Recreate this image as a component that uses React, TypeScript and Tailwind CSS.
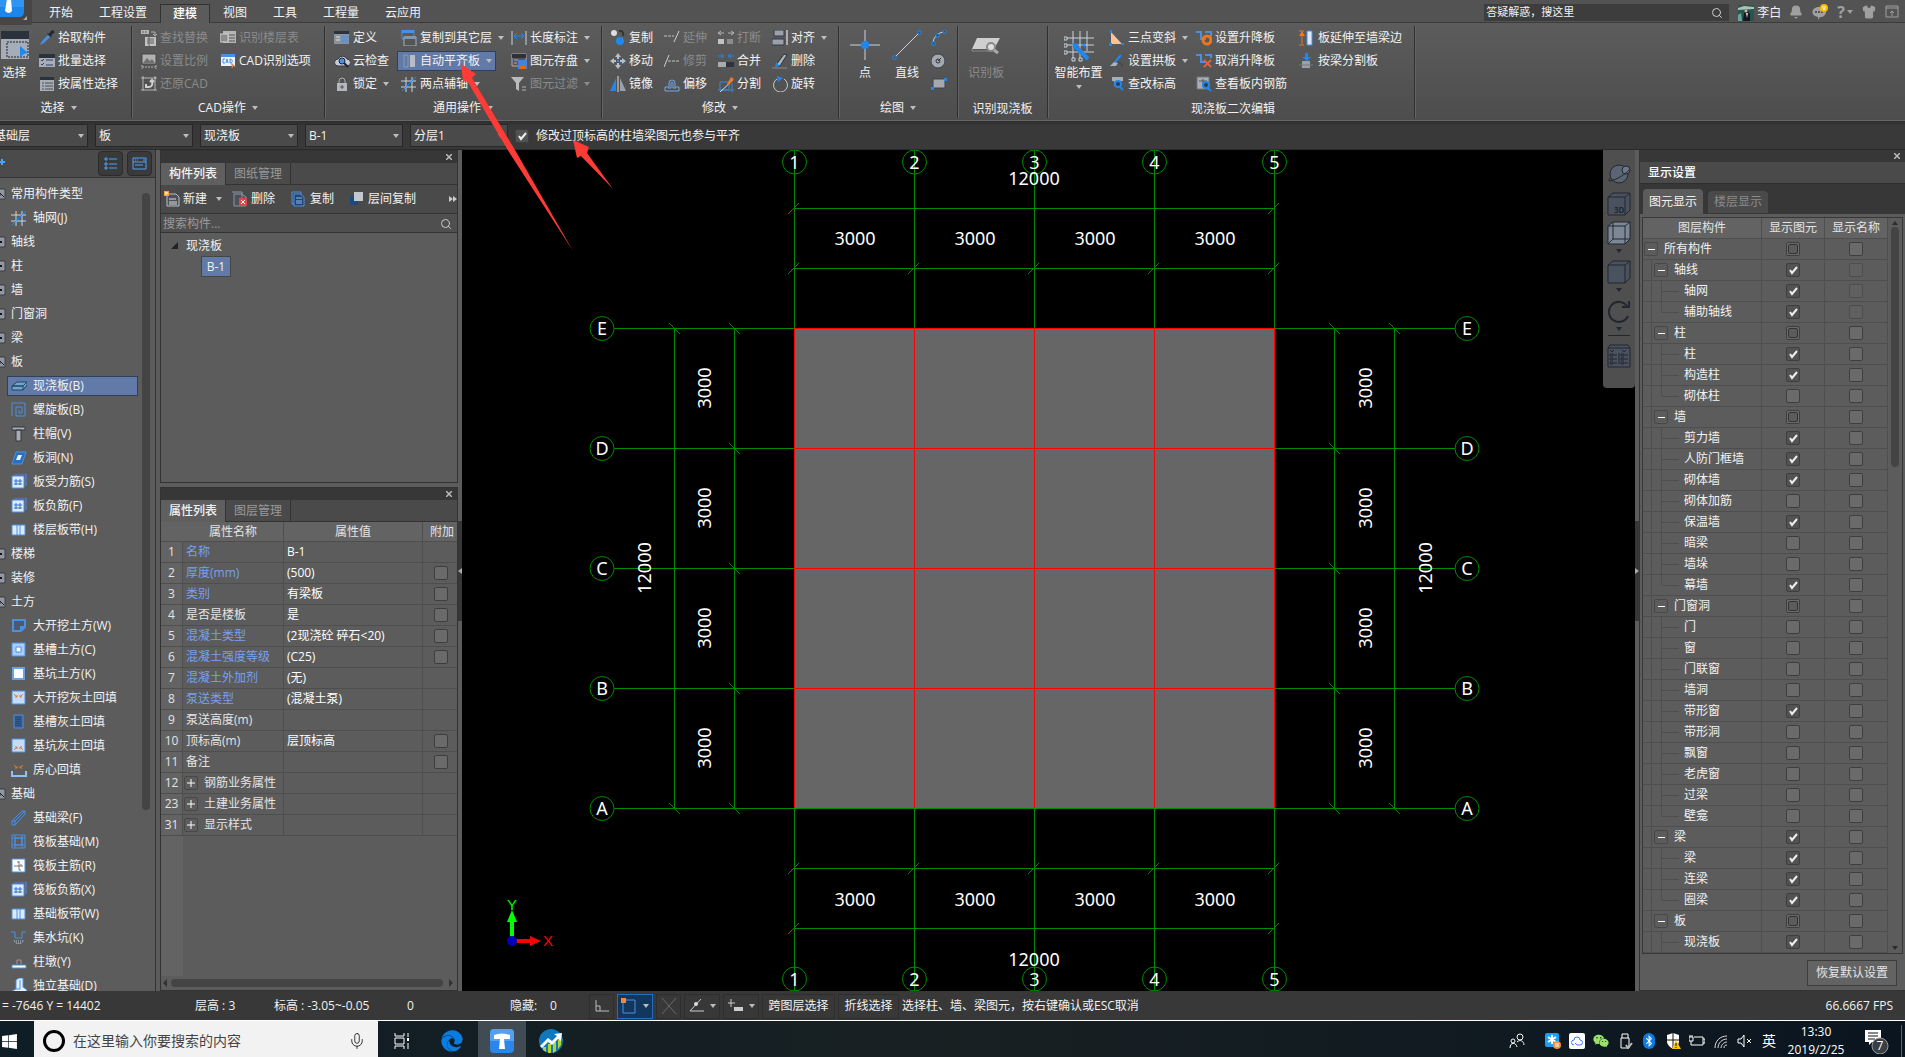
import { Fragment, ReactNode } from 'react';
import { Mic, Search, Shirt, Bell } from 'lucide-react';
import { FaWindows, FaEdge, FaBluetoothB, FaWeixin } from 'react-icons/fa';

const B = '#4a90e2';
const L = '#c9d3de';
const G = '#a9adb5';

// 16x16 drawings, keyed by tool
const icons: Record<string, ReactNode> = {
    pick: <><path d="M1 15l2-4 6-6 2 2-6 6z" fill={B} /><path d="M8 4l1-1 1 1 2-3c2-2 4 0 3 2l-3 2 1 1-1 1z" fill="#222831" /></>,
    batch: <><path d="M0 1h16v4H0z" fill="#2c323c" /><path d="M0 5h16v9H0z" fill={G} /><path d="M2 7l1 1 2-2M2 11l1 1 2-2M7 7h7M7 12h7" stroke="#27456e" fill="none" /></>,
    attr: <><path d="M1 1h14v3H1z" fill="#2c323c" /><path d="M1 4h14v11H1z" fill={G} /><path d="M3 7h2M3 10h2M3 13h2M6 7h8M6 10h8M6 13h8" stroke="#4a4f58" /></>,
    findrep: <><path d="M0 0h8v4H0z" fill="#ccc" /><path d="M2 1v2M5 1v2" stroke="#666" /><path d="M10 2h4v4M12 4l2 2 2-2" stroke="#ccc" fill="none" /><path d="M4 7h11v9H4z" fill="#ddd" /><path d="M6 9h7M6 11h7M6 13h7M8 7v9" stroke="#666" /></>,
    scale: <><path d="M1 1h14v10H1z" fill="#c8c8c8" stroke="#444" /><path d="M2 10l4-5 3 3 2-2 3 4z" fill="#777" /><path d="M1 14h14M1 12v4M15 12v4" stroke="#ccc" strokeDasharray="2 1" /></>,
    restore: <><path d="M2 2h12v12H2zM0 2h3M13 2h3M0 14h3M13 14h3M2 0v3M14 0v3" stroke="#ccc" fill="none" /><path d="M5 11h3c3 0 4-3 3-6M5 8v3h3M13 6l-2-2-2 2" stroke="#eee" strokeWidth="2" fill="none" /></>,
    floors: <><path d="M3 1h13v12H3z" fill="#ccc" /><path d="M0 4h8v8H0z" fill="#999" stroke="#eee" /><path d="M9 5h6M9 8h6M9 11h6" stroke="#555" /></>,
    cad: <><path d="M1 1h14v12H1z" fill="#e8f1ff" /><path d="M1 1h14v3H1z" fill={B} /><path d="M5 6H3v4h2M6 10l1-4 1 4M10 6v4c3 0 3-4 0-4" stroke={B} fill="none" /><path d="M11 9l5 5-3-1-1 3z" fill="#f08a60" /></>,
    define: <><path d="M0 1h15v13H0z" fill="#8d939c" /><path d="M0 1h15v3H0z" fill="#2c323c" /><path d="M2 7h4M2 10h4" stroke="#ddd" /><path d="M8 6h6v2H8zM8 10h6v2H8z" stroke={B} fill="none" /></>,
    cloud: <><path d="M4 13a3 3 0 010-7 5 5 0 019 0 3 3 0 010 7z" fill="#c6ccd6" stroke="#333b47" /><circle cx="8" cy="8" r="3" fill={B} stroke="#223" /><path d="M10 10l4 4" stroke="#223" strokeWidth="2" /></>,
    lock: <><path d="M5 7V5a3 3 0 016 0v2" stroke={G} fill="none" /><path d="M3 7h10v8H3z" fill="#b4b7bd" /><path d="M8 9v4M6 11h4" stroke="#555" /></>,
    copyfloor: <><path d="M1 0h12v3H1z" fill={B} /><path d="M1 0h12v9H1z" fill="none" stroke={B} /><path d="M3 7h12v9H3z" fill="#555" stroke="#9fb0c4" /><path d="M3 6h12v3H3z" fill="#8496a8" /></>,
    level: <><path d="M3 2h4v12H3z" fill="none" stroke="#8b99b0" /><path d="M9 2h5v12H9z" fill="#b6bdc9" /></>,
    axis: <><path d="M5 1v15M11 1v15M0 5h15M0 11h15" stroke={L} /><path d="M1 15L15 1" stroke="#1e88f0" /></>,
    length: <><path d="M1 1v14M15 1v14" stroke={L} /><path d="M3 6h10" stroke="#1e88f0" /><path d="M6 3L3 6l3 3M10 3l3 3-3 3" stroke="#1e88f0" fill="none" /></>,
    save: <><path d="M1 1h14v12H1z" fill="none" stroke={G} /><path d="M1 1h14v4H1z" fill="#2c323c" /><path d="M3 7h4M3 10h3" stroke={G} /><path d="M7 7h9v9H7z" fill="#3d86da" /><path d="M9 13h5v3H9z" fill="#e06a1c" /></>,
    filter: <><path d="M0 1h13L8 7v8l-3-2V7z" fill="#d5d5d5" /><path d="M11 11h4M11 14h4" stroke="#ccc" /></>,
    copy: <><circle cx="4" cy="3" r="3" fill="#ddd" /><circle cx="10" cy="11" r="4" fill="#1e88f0" /><path d="M9 1c3-1 5 2 4 5" stroke="#333" fill="none" strokeWidth="2" /></>,
    move: <><path d="M8 0l3 4H9v2H7V4H5zM8 16l-3-4h2v-2h2v2h2zM0 8l4-3v2h2v2H4v2zM16 8l-4 3V9h-2V7h2V5z" fill="#b8bfca" /><path d="M7 7h2v2H7z" fill="#1e88f0" /></>,
    mirror: <><path d="M6 2v13H0z" fill="#1e88f0" /><path d="M10 2v13h6z" fill="#9aa0aa" /><path d="M8 0v16" stroke="#ddd" /></>,
    extend: <><path d="M0 6h10" stroke="#ddd" strokeDasharray="3 1" /><path d="M10 12l5-11" stroke="#eee" /></>,
    trim: <><path d="M0 14L5 2" stroke="#eee" /><path d="M4 8h12" stroke="#ddd" strokeDasharray="3 1" /></>,
    offset: <path d="M1 15v-4h4V7a3 3 0 116 0v4h4v4zM4 12h3V7c0-1 2-1 2 0v5h3" fill="none" stroke="#6fa8e8" />,
    breaks: <><path d="M0 9h6v5H0z" fill="#ddd" /><path d="M9 9h6v5H9z" fill="#999" /><path d="M0 3h6M3 1L0 3l3 2M10 3h6M13 1l3 2-3 2" stroke="#ccc" fill="none" /></>,
    merge: <><path d="M0 9h8v5H0z" fill="#aaa" /><path d="M8 9h8v5H8z" fill="#2d3440" /><path d="M0 3h6M3 1l3 2-3 2M16 3h-6M13 1l-3 2 3 2" stroke="#1e88f0" fill="none" /></>,
    split: <><path d="M2 6h9v8H2zM0 14h16M14 7v9" fill="none" stroke="#3d86da" /><path d="M2 16L15 4" stroke="#ddd" /><path d="M9 8l4-7 3 2-5 6z" fill="#ef7a23" /></>,
    align: <><path d="M2 0h10v6H2zM0 9h12v6H0z" fill="#9ba1ab" stroke="#333b47" /><path d="M15 0v15" stroke="#fff" /></>,
    erase: <><path d="M4 12L12 1l3 1-7 11z" fill={G} stroke="#2c323c" /><path d="M4 9l4 4-5 1z" fill="#1e88f0" /><path d="M0 15h15" stroke="#888" /></>,
    rotate: <><path d="M5 3a7 7 0 107 0" fill="none" stroke="#c5cad2" /><path d="M5 0l6 2-5 4z" fill="#1e88f0" /></>,
    arc: <><path d="M2 14C2 7 7 2 14 2" stroke={L} fill="none" /><path d="M1 12h3v3H1zM5 4h3v3H5zM12 0h3v3h-3z" fill="#444" stroke="#1e88f0" /></>,
    circle: <><circle cx="7" cy="8" r="7" fill="#a4a8b0" stroke="#3c424c" /><path d="M7 8l3-3" stroke="#333" /><circle cx="7" cy="8" r="2" fill="none" stroke="#333" /></>,
    rect: <><path d="M2 3h12v9H2z" fill="#a4a8b0" stroke="#3c424c" /><path d="M0 11h3v3H0zM13 2h3v3h-3z" fill="#1e88f0" /></>,
    slope: <><path d="M2 2v12h11z" fill="#fbc39a" /><path d="M1 0h2v3H1zM0 13h3v3H0zM12 13h3v2h-3z" fill="#1e88f0" /></>,
    arch: <><path d="M6 9l6-7" stroke="#1e88f0" strokeWidth="2" /><path d="M1 13l4-4 4 1-2 3z" fill="#a9b3bd" /><path d="M9 10c3-1 4 1 4 4" stroke="#3c424c" fill="none" /></>,
    elev: <><path d="M3 1h11v4h-3v5H5V5H3z" fill={G} /><circle cx="9" cy="8" r="3" fill="#333b47" stroke="#1e88f0" strokeWidth="2" /><path d="M11 11l3 3" stroke="#1e88f0" strokeWidth="2" /></>,
    lift: <><path d="M0 2h5v7h5M9 2h6v4" stroke={B} strokeWidth="2" fill="none" /><circle cx="11" cy="10" r="4" fill="none" stroke="#f0761d" strokeWidth="3" /></>,
    unlift: <><path d="M0 2h5v7h4M9 2h6v3" stroke={B} strokeWidth="2" fill="none" /><path d="M8 7l7 7M15 7l-7 7" stroke="#d9663f" strokeWidth="2" /></>,
    rebar: <><path d="M1 1h12v12H1z" fill={G} stroke="#777" /><path d="M3 5h8M7 3v8" stroke="#555" /><circle cx="10" cy="9" r="3" fill="#333b47" stroke="#1e88f0" strokeWidth="2" /><path d="M12 12l3 3" stroke="#1e88f0" strokeWidth="2" /></>,
    towall: <><path d="M3 3v11M0 1h5M0 15h5" stroke="#f0761d" /><path d="M3 1l3 5H0z" fill="#f0761d" /><path d="M8 1h5v14H8z" fill="#dbe9ff" stroke={B} /></>,
    bybeam: <><path d="M3 8h8v7H3z" fill="#9aa0aa" /><path d="M0 12h14" stroke="#777" /><path d="M6 0h3v4h3l-4 4-5-4h3z" fill="#1e88f0" /></>,
    slab: <><path d="M1 8l5-4h10l-4 4zM1 8h11v4H1zM12 8l4-4v3l-4 5" fill="#6fa6c9" stroke="#1f4569" /></>,
    spiral: <path d="M1 14V1h13v13H5V5h6v6H8V8" fill="none" stroke={B} />,
    cap: <><path d="M1 1h13v3H1zM5 4h5v11H5z" fill={G} stroke="#33383f" /></>,
    hole: <><path d="M1 14L5 2h10l-4 12z" fill="#2a6fbf" stroke={B} /><path d="M5 10l2-5h4l-2 5z" fill="#e8f4ff" /></>,
    bars: <><path d="M3 0h12v12" fill="none" stroke={B} /><path d="M1 2h12v12H1z" fill="#dcebff" stroke={B} /><path d="M3 7h8M5 5v6M9 5v6M3 10h8" stroke="#3473c0" /></>,
    strip: <><path d="M1 3h13v10H1z" fill="#dcebff" stroke={B} /><path d="M6 3v10M9 3v10" stroke={B} /></>,
    dig: <path d="M2 2h12v7l-4 4H2zM14 9h-4v4" fill="#4c5a70" stroke={B} strokeWidth="2" />,
    trench: <><path d="M1 1h13v13H1z" fill="#a9cdf6" stroke={B} /><path d="M5 5h5v5H5z" fill="#fff" stroke={B} /></>,
    pit: <path d="M2 2h11v11H2z" fill="#fff" stroke="#66a3ea" strokeWidth="2" />,
    fill: <><path d="M1 1h13v13H1z" fill="#c5ddf9" stroke={B} /><path d="M3 4l3 3M12 4L9 7M6 5v2H4M9 5v2h2" stroke="#e07b32" fill="none" /></>,
    trenchfill: <><path d="M3 1h9v13H3z" fill="#365a8c" stroke={B} /><path d="M5 3v10M7 3v10M9 3v10" stroke="#22395c" strokeDasharray="1 1" /></>,
    pitfill: <><path d="M1 1h13v13H1z" fill="#c5ddf9" stroke={B} /><path d="M3 12l3-3M12 12L9 9M4 9h2v2M11 9H9v2" stroke="#e07b32" fill="none" /></>,
    room: <><path d="M1 9v5h14V9" fill="none" stroke="#8fc0f7" strokeWidth="2" /><path d="M3 3l3 3M12 3L9 6M6 4v2H4M9 4v2h2" stroke="#e07b32" fill="none" /></>,
    fbeam: <path d="M1 15v-4L11 1h3v3L4 15zM1 11h3v4M4 11L14 1" fill="#4c5f78" stroke={B} />,
    raft: <path d="M1 1h13v13H1zM4 4h7v7H4zM4 1v13M11 1v13M1 4h13M1 11h13" fill="none" stroke={B} />,
    raftmain: <><path d="M1 1h13v13H1z" fill="#fff" stroke={B} /><path d="M3 8h9M8 3v9M6 4h2M10 6v2M8 12h2" stroke="#777" fill="none" /></>,
    sump: <><path d="M0 2h4v6h7V2h4M3 10c2 5 8 5 10 0" fill="none" stroke={B} /><path d="M3 11h10M5 13h6" stroke="#bbb" strokeDasharray="1 1" /></>,
    pier: <><path d="M1 11h14v3H1z" fill="#fff" stroke={B} /><path d="M6 10V6h4v4" fill="none" stroke="#999" /></>,
    footing: <><path d="M5 11V2l3-2h4v9l4 3v4H1v-3z" fill="#e6f1ff" stroke={B} /><path d="M9 2v9H5" fill="none" stroke={B} /></>,
    create: <><path d="M3 3h9l3 3v9H3z" fill="#4c5158" stroke="#b8bfc8" /><path d="M5 8h7M5 11h8M5 13h8" stroke="#ddd" /><path d="M0 0h5v5H0z" fill="#f5a623" /><path d="M2 1v3M1 2h3" stroke="#fff" /></>,
    del: <><path d="M0 1h10v12M2 3h8l4 3v9H2z" fill="#4c5158" stroke="#8c96a3" /><path d="M7 7h8v8H7z" fill="#d84a4a" /><path d="M9 9l4 4M13 9l-4 4" stroke="#fff" /></>,
    dup: <><path d="M1 1h9v12H1z" fill="none" stroke={B} /><path d="M3 3h6l4 3v9H3z" fill="#24446e" stroke={B} /><path d="M5 7h6M5 10h6M5 12h6" stroke="#8bbcf5" /></>,
    dupfloor: <><path d="M1 5h8v9H1z" fill="#1d4a7c" /><path d="M5 1h9v9H5z" fill="#c3c8d0" /></>,
};

function Icon({ name, dim }: { name: string; dim?: boolean }) {
    return <svg viewBox="0 0 16 16" className={dim ? 'size-4 shrink-0 opacity-80' : 'size-4 shrink-0'} aria-hidden="true">{icons[name]}</svg>;
}

function Caret({ className = 'text-[#bdbdbd]' }: { className?: string }) {
    return <svg viewBox="0 0 6 4" className={`h-1 w-1.5 shrink-0 ${className}`} aria-hidden="true"><path d="M0 0h6L3 4z" fill="currentColor" /></svg>;
}

function Tool({ icon, label, caret, off, on }: { icon: string; label: string; caret?: boolean; off?: boolean; on?: boolean }) {
    return (
        <div className="flex h-[23px] items-center">
            <button
                disabled={off}
                className={`-ml-1 flex h-5 items-center gap-[3px] border px-[3px] ${on ? 'border-[#30405c] bg-[#617aa8]' : 'border-transparent'} ${off ? 'text-[#8b8b8b]' : ''}`}
            >
                <Icon name={icon} dim={off} />
                <span>{label}</span>
                {caret && <span className="pl-[3px]"><Caret className={off ? 'text-[#8b8b8b]' : 'text-[#bdbdbd]'} /></span>}
            </button>
        </div>
    );
}

function Group({ label, caret, width, children, shift = 'pt-px' }: { label: string; caret?: boolean; width: string; children: ReactNode; shift?: string }) {
    return (
        <section className={`flex shrink-0 flex-col border-r border-[#2f2f2f] shadow-[1px_0_0_#646464] ${width}`}>
            <div className="flex h-[71px]">{children}</div>
            <div className={`flex h-[22px] items-center justify-center gap-1.5 ${shift}`}>
                {label}{caret && <Caret />}
            </div>
        </section>
    );
}

const tabs = ['开始', '工程设置', '建模', '视图', '工具', '工程量', '云应用'];

function TitleBar() {
    return (
        <header className="flex h-[23px] items-end border-b border-[#3c3c3c] bg-[#535353]">
            <div className="relative z-10 -mb-[3px] h-[26px] w-8 shrink-0 bg-[#464646]">
                <svg viewBox="0 0 32 26" className="h-full w-full" aria-hidden="true">
                    <path d="M0 0h24v13q0 5-5 5H0z" fill="#1c86ea" />
                    <path d="M0 0h24v8H0z" fill="#3ba0f6" opacity=".6" />
                    <path d="M7 0h4l1 12q-3 4-7 0z" fill="#fff" />
                    <path d="M27 17v4h-4z" fill="#aaa" />
                </svg>
            </div>
            <nav className="flex pl-1">
                {tabs.map(t => (
                    <button key={t} className={`h-[18px] px-3 leading-4 ${t === '建模' ? '-mb-px h-[19px] border border-b-0 border-[#333] bg-[#5b5b5b] font-medium text-white' : 'border-x border-transparent'}`}>
                        {t}
                    </button>
                ))}
            </nav>
            <label className="mb-px ml-auto flex h-[17px] w-[245px] items-center bg-[#3d3d3d] px-0.5 text-[11px]">
                <input aria-label="搜索" defaultValue="答疑解惑，搜这里" className="min-w-0 flex-1 outline-none" />
                <Search className="mr-1 size-3 text-[#ccc]" />
            </label>
            <div className="flex h-full items-center gap-[3px] pt-[3px] pl-[9px]">
                <svg viewBox="0 0 16 16" className="size-4" aria-hidden="true">
                    <path d="M0 0h16v16H0z" fill="#28564f" />
                    <path d="M0 3l6-2 10 1v2L0 5z" fill="#a9c4b4" />
                    <path d="M5 16l1-8 3-3 3 4v7z" fill="#15191d" />
                    <path d="M8 8l1 5 1-5z" fill="#ddd" />
                    <circle cx="8" cy="6" r="1.5" fill="#d8b49a" />
                    <path d="M0 10l3-2 1 8H0z" fill="#6aa39c" />
                </svg>
                <span>李白</span>
            </div>
            <div className="flex h-full items-center gap-[9px] pt-0.5 pr-1.5 pl-2 text-[#a0a0a0]">
                <Bell className="size-3.5 fill-current" />
                <svg viewBox="0 0 16 16" className="size-4" aria-label="消息">
                    <path d="M7 3c9 0 9 10 1 10l-2 3v-3C-2 12-1 3 7 3z" fill="#a0a0a0" />
                    <path d="M3 8h2M6 8h2M9 8h2" stroke="#555" strokeWidth="2" />
                    <circle cx="12" cy="4" r="4" fill="#ffb800" /><path d="M11 2v2l1 2 1-2V2" fill="none" stroke="#fff" />
                </svg>
                <span className="flex items-center gap-0.5 text-base leading-4 font-bold">?<Caret className="text-[#a0a0a0]" /></span>
                <Shirt className="size-3.5 fill-current" />
                <svg viewBox="0 0 14 14" className="size-3.5" aria-label="收起"><path d="M1 1h12v11H1zM1 3h12M7 11V6M5 8l2-2 2 2" fill="none" stroke="currentColor" /></svg>
            </div>
        </header>
    );
}

function Ribbon() {
    return (
        <div className="flex h-[98px] overflow-hidden border-b border-[#666] bg-linear-to-b from-[#5c5c5c] to-[#4d4d4d] pt-[3px] pb-0.5">
            <Group label="选择" caret width="w-[132px]" shift="pt-px pr-3.5">
                <button className="flex w-[29px] flex-col items-center gap-1.5 pt-[5px]">
                    <svg viewBox="0 0 28 28" className="size-7" aria-hidden="true">
                        <path d="M0 0h28v8H0z" fill="#2c323c" /><path d="M0 8h28v20H0z" fill="#a6adb9" />
                        <path d="M6 11h21v15H6z" fill="none" stroke="#222" strokeDasharray="2 1" /><path d="M19 15l8 7-4 1-4 3z" fill="#1e88f0" />
                    </svg>
                    <span className="w-6 whitespace-nowrap leading-4">选择</span>
                </button>
                <div className="pl-2.5">
                    <Tool icon="pick" label="拾取构件" />
                    <Tool icon="batch" label="批量选择" />
                    <Tool icon="attr" label="按属性选择" />
                </div>
            </Group>
            <Group label="CAD操作" caret width="w-[193px]">
                <div className="w-[88px] pl-[9px]">
                    <Tool icon="findrep" label="查找替换" off />
                    <Tool icon="scale" label="设置比例" off />
                    <Tool icon="restore" label="还原CAD" off />
                </div>
                <div>
                    <Tool icon="floors" label="识别楼层表" off />
                    <Tool icon="cad" label="CAD识别选项" />
                </div>
            </Group>
            <Group label="通用操作" caret width="w-[277px]">
                <div className="w-[76px] pl-[9px]">
                    <Tool icon="define" label="定义" />
                    <Tool icon="cloud" label="云检查" />
                    <Tool icon="lock" label="锁定" caret />
                </div>
                <div className="w-[110px]">
                    <Tool icon="copyfloor" label="复制到其它层" caret />
                    <Tool icon="level" label="自动平齐板" caret on />
                    <Tool icon="axis" label="两点辅轴" caret />
                </div>
                <div>
                    <Tool icon="length" label="长度标注" caret />
                    <Tool icon="save" label="图元存盘" caret />
                    <Tool icon="filter" label="图元过滤" caret off />
                </div>
            </Group>
            <Group label="修改" caret width="w-[237px]">
                <div className="grid grid-cols-[54px_54px_54px_72px] pl-2">
                    <Tool icon="copy" label="复制" />
                    <Tool icon="extend" label="延伸" off />
                    <Tool icon="breaks" label="打断" off />
                    <Tool icon="align" label="对齐" caret />
                    <Tool icon="move" label="移动" />
                    <Tool icon="trim" label="修剪" off />
                    <Tool icon="merge" label="合并" />
                    <Tool icon="erase" label="删除" />
                    <Tool icon="mirror" label="镜像" />
                    <Tool icon="offset" label="偏移" />
                    <Tool icon="split" label="分割" />
                    <Tool icon="rotate" label="旋转" />
                </div>
            </Group>
            <Group label="绘图" caret width="w-[119px]">
                <button className="flex w-[52px] flex-col items-center gap-[5px] pt-1">
                    <svg viewBox="0 0 30 30" className="size-[30px]" aria-hidden="true"><path d="M15 0v11M15 19v11M0 15h11M19 15h11" stroke={L} /><circle cx="15" cy="15" r="4" fill="#1e88f0" /></svg>
                    <span className="leading-4">点</span>
                </button>
                <button className="flex w-8 flex-col items-center gap-[5px] pt-1">
                    <svg viewBox="0 0 30 30" className="size-[30px]" aria-hidden="true"><path d="M3 27L27 3" stroke={L} /><path d="M1 26h3v3H1zM26 1h3v3h-3z" fill="#444" stroke="#1e88f0" /></svg>
                    <span className="leading-4">直线</span>
                </button>
                <div className="flex flex-col gap-[7px] pt-1 pl-2">
                    <button aria-label="弧"><Icon name="arc" /></button>
                    <button aria-label="圆"><Icon name="circle" /></button>
                    <button aria-label="矩形"><Icon name="rect" /></button>
                </div>
            </Group>
            <Group label="识别现浇板" width="w-[90px]" shift="pt-[3px]">
                <button disabled className="flex w-14 flex-col items-center gap-[5px] pt-1 text-[#8b8b8b]">
                    <svg viewBox="0 0 30 30" className="size-[30px]" aria-hidden="true"><path d="M6 8h23l-6 11H1z" fill="#cfcfcf" /><path d="M1 19v2h20" fill="none" stroke="#888" /><circle cx="20" cy="17" r="4" fill="#ddd" stroke="#888" strokeWidth="2" /><path d="M23 20l4 3" stroke="#aaa" strokeWidth="3" /></svg>
                    <span className="leading-4">识别板</span>
                </button>
            </Group>
            <Group label="现浇板二次编辑" width="w-[367px]" shift="pt-[3px] pl-1">
                <button className="flex w-[61px] flex-col items-center gap-0.5 pt-[5px]">
                    <svg viewBox="0 0 30 32" className="h-8 w-[30px] shrink-0" aria-hidden="true">
                        <path d="M9 0v28M16 0v28M23 0v20M2 7h28M2 14h28M2 21h28" stroke={L} />
                        <path d="M0 6h3v3H0zM0 13h3v3H0zM0 20h3v3H0zM8 27h3v3H8zM15 27h3v3h-3z" fill="#555" stroke={L} />
                        <path d="M10 14l14 14" stroke="#1e88f0" strokeWidth="4" /><path d="M8 12l7 1-5 5zM18 14l3-2v5z" fill="#1e88f0" />
                    </svg>
                    <span className="whitespace-nowrap leading-4">智能布置</span>
                    <span className="pt-0.5"><Caret /></span>
                </button>
                <div className="w-[87px]">
                    <Tool icon="slope" label="三点变斜" caret />
                    <Tool icon="arch" label="设置拱板" caret />
                    <Tool icon="elev" label="查改标高" />
                </div>
                <div className="w-[103px]">
                    <Tool icon="lift" label="设置升降板" />
                    <Tool icon="unlift" label="取消升降板" />
                    <Tool icon="rebar" label="查看板内钢筋" />
                </div>
                <div>
                    <Tool icon="towall" label="板延伸至墙梁边" />
                    <Tool icon="bybeam" label="按梁分割板" />
                </div>
            </Group>
        </div>
    );
}

function Check({ state = '', label }: { state?: string; label: string }) {
    const dim = state === 'off';
    return (
        <span className="grid size-3.5 place-items-center *:[grid-area:1/1]">
            <input
                type="checkbox"
                aria-label={label}
                defaultChecked={state === 'on'}
                disabled={dim}
                className={`peer size-3.5 appearance-none rounded-xs border ${dim ? 'border-[#4d4d4d] bg-[#606060]' : 'border-[#3e3e3e] bg-[#6a6a6a] checked:bg-[#525252]'}`}
            />
            <svg viewBox="0 0 14 14" className="pointer-events-none hidden size-3.5 peer-checked:block" aria-hidden="true"><path d="M4 7l2 3 5-6" fill="none" stroke="#eee" strokeWidth="2" /></svg>
            {state === 'part' && <span className="pointer-events-none size-2.5 rounded-xs border border-[#333] bg-[#5c5c5c]" />}
        </span>
    );
}

function FilterBar() {
    const picks = ['基础层', '板', '现浇板', 'B-1', '分层1'];
    return (
        <div className="flex h-[29px] items-center gap-[7px] border-b border-[#2b2b2b] bg-linear-to-b from-[#2e2e2e] to-[#393939] to-20% pt-px">
            {picks.map((p, i) => (
                <label key={p} className={`grid h-[23px] w-[98px] shrink-0 items-center border border-[#282828] bg-[#4a4a4a] *:[grid-area:1/1] ${i === 0 ? '-ml-2.5' : ''}`}>
                    <select aria-label={p} className="h-full w-full appearance-none px-[3px] outline-none"><option>{p}</option></select>
                    <span className="pointer-events-none mr-[3px] flex justify-self-end"><Caret /></span>
                </label>
            ))}
            <label className="flex items-center gap-[7px]">
                <Check state="on" label="参与平齐" />
                修改过顶标高的柱墙梁图元也参与平齐
            </label>
        </div>
    );
}

// entries with an icon are leaves, the rest are category headings
const tree: [string, string?][] = [
    ['常用构件类型'], ['轴网(J)', 'axis'], ['轴线'], ['柱'], ['墙'], ['门窗洞'], ['梁'], ['板'],
    ['现浇板(B)', 'slab'], ['螺旋板(B)', 'spiral'], ['柱帽(V)', 'cap'], ['板洞(N)', 'hole'],
    ['板受力筋(S)', 'bars'], ['板负筋(F)', 'bars'], ['楼层板带(H)', 'strip'],
    ['楼梯'], ['装修'], ['土方'],
    ['大开挖土方(W)', 'dig'], ['基槽土方(C)', 'trench'], ['基坑土方(K)', 'pit'], ['大开挖灰土回填', 'fill'],
    ['基槽灰土回填', 'trenchfill'], ['基坑灰土回填', 'pitfill'], ['房心回填', 'room'],
    ['基础'],
    ['基础梁(F)', 'fbeam'], ['筏板基础(M)', 'raft'], ['筏板主筋(R)', 'raftmain'], ['筏板负筋(X)', 'bars'],
    ['基础板带(W)', 'strip'], ['集水坑(K)', 'sump'], ['柱墩(Y)', 'pier'], ['独立基础(D)', 'footing'],
];
const opened = ['常用构件类型', '板', '土方', '基础'];

function TypeTree() {
    return (
        <aside className="flex w-[156px] shrink-0 flex-col border-r border-[#333]">
            <div className="flex h-7 items-center gap-1 border-b border-[#333] bg-[#4b4b4b] pr-[3px] text-[#4aa3ff]">
                <svg viewBox="0 0 5 6" className="-mt-1 mr-auto h-1.5 w-[5px]" aria-hidden="true"><path d="M0 3h5M2 0v6" stroke="currentColor" strokeWidth="2" /></svg>
                <button aria-label="列表" className="grid size-[25px] place-items-center rounded-sm border border-[#2b2b2b] bg-[#3a3a3a]">
                    <svg viewBox="0 0 13 13" className="size-[13px]"><path d="M5 2h8M5 7h8M5 11h8M1 1h2v2H1zM1 6h2v2H1zM1 10h2v2H1z" fill="none" stroke="currentColor" /></svg>
                </button>
                <button aria-label="面板" className="grid size-[25px] place-items-center rounded-sm border border-[#2b2b2b] bg-[#3a3a3a]">
                    <svg viewBox="0 0 15 13" className="h-[13px] w-[15px]"><path d="M1 1h13v11H1zM1 5h13M3 3h1M5 3h1M11 3h2M3 8h8" fill="none" stroke="currentColor" /></svg>
                </button>
            </div>
            <div className="flex min-h-0 flex-1 overflow-hidden">
                <ul className="w-[138px] pt-1">
                    {tree.map(([name, icon]) => icon ? (
                        <li key={name} className="flex h-6 items-center pl-[7px]">
                            <button className={`flex h-5 w-full items-center gap-1.5 border pl-[3px] ${name === '现浇板(B)' ? 'border-[#30405c] bg-[#617aa8]' : 'border-transparent'}`}>
                                <Icon name={icon} />{name}
                            </button>
                        </li>
                    ) : (
                        <li key={name} className="flex h-6 items-center gap-[5px]">
                            <svg viewBox="0 0 6 12" className="h-3 w-1.5 shrink-0" aria-hidden="true">
                                <path d="M0 1h5v10H0" fill="#9196a0" stroke="#3a3f48" />
                                {opened.includes(name) ? <path d="M0 8V5l4 4" fill="none" stroke="#222" /> : <path d="M0 6h2" stroke="#111" strokeWidth="2" />}
                            </svg>
                            {name}
                        </li>
                    ))}
                </ul>
                <div className="mt-[15px] ml-1 h-[617px] w-2 rounded-full bg-[#444]" />
            </div>
        </aside>
    );
}

function CloseStrip() {
    return (
        <div className="flex h-3 shrink-0 items-center justify-end bg-[#373737] pr-[5px]">
            <button aria-label="关闭"><svg viewBox="0 0 6 6" className="size-1.5"><path d="M0 0l6 6M6 0L0 6" stroke="#bbb" strokeWidth="1.5" /></svg></button>
        </div>
    );
}

function PanelHead({ names }: { names: string[] }) {
    return (
        <>
            <CloseStrip />
            <div className="flex h-[22px] border-b border-[#333] bg-[#4a4a4a]">
                <button className="-mb-px w-16 bg-[#5f5f5f] font-medium">{names[0]}</button>
                <button className="w-[66px] border-x border-[#333] text-[#999]">{names[1]}</button>
            </div>
        </>
    );
}

function ComponentList() {
    return (
        <section className="flex h-[333px] flex-col border border-[#333]">
            <PanelHead names={['构件列表', '图纸管理']} />
            <div className="flex h-[29px] items-center border-b border-[#333] bg-[#4a4a4a] pl-[3px]">
                <button className="flex w-[68px] items-center gap-[3px]"><Icon name="create" />新建<span className="pl-1.5"><Caret /></span></button>
                <button className="flex w-[59px] items-center gap-[3px]"><Icon name="del" />删除</button>
                <button className="flex w-[58px] items-center gap-[3px]"><Icon name="dup" />复制</button>
                <button className="flex items-center gap-[3px]"><Icon name="dupfloor" />层间复制</button>
                <svg viewBox="0 0 8 6" className="ml-auto h-1.5 w-2" aria-hidden="true"><path d="M0 0l4 3-4 3zM4 0l4 3-4 3z" fill="#ccc" /></svg>
            </div>
            <label className="flex h-[19px] items-center border-b border-[#333] bg-[#4f4f4f] pt-px pr-[5px] pl-0.5">
                <input aria-label="搜索构件" placeholder="搜索构件..." className="min-w-0 flex-1 outline-none placeholder:text-[#9a9a9a]" />
                <Search className="size-3 text-[#ccc]" />
            </label>
            <div className="flex h-[23px] items-center gap-2 pt-0.5 pl-2.5">
                <svg viewBox="0 0 7 7" className="size-[7px]" aria-hidden="true"><path d="M7 0v7H0z" fill="#222" /></svg>
                现浇板
            </div>
            <button className="ml-10 flex h-[21px] w-[30px] items-center justify-center border border-[#454545] bg-[#617aa8]">B-1</button>
        </section>
    );
}

// number, name, value, has tick box, important (blue) name
const props: [number, string, string, boolean, boolean][] = [
    [1, '名称', 'B-1', false, true],
    [2, '厚度(mm)', '(500)', true, true],
    [3, '类别', '有梁板', true, true],
    [4, '是否是楼板', '是', true, false],
    [5, '混凝土类型', '(2现浇砼 碎石<20)', true, true],
    [6, '混凝土强度等级', '(C25)', true, true],
    [7, '混凝土外加剂', '(无)', false, true],
    [8, '泵送类型', '(混凝土泵)', false, true],
    [9, '泵送高度(m)', '', false, false],
    [10, '顶标高(m)', '层顶标高', true, false],
    [11, '备注', '', true, false],
    [12, '钢筋业务属性', '', false, false],
    [23, '土建业务属性', '', false, false],
    [31, '显示样式', '', false, false],
];

function PropertyList() {
    return (
        <section className="flex min-h-0 flex-1 flex-col border border-[#333]">
            <PanelHead names={['属性列表', '图层管理']} />
            <table className="w-full table-fixed border-separate border-spacing-0 text-[#e4e4e4]">
                <colgroup><col className="w-[22px]" /><col className="w-[101px]" /><col /><col className="w-[34px]" /></colgroup>
                <thead>
                    <tr className="h-5 bg-[#636363] *:border-b *:border-[#4e4e4e] *:p-0 *:font-normal *:leading-4">
                        <th></th><th className="border-r">属性名称</th><th className="border-r">属性值</th><th><span className="block pl-1 whitespace-nowrap">附加</span></th>
                    </tr>
                </thead>
                <tbody>
                    {props.map(([n, name, value, tick, blue]) => (
                        <tr key={n} className="h-[21px] *:border-b *:border-[#4e4e4e] *:p-0 *:leading-4">
                            <td className="border-r bg-[#636363] text-center">{n}</td>
                            <td className={`border-r whitespace-nowrap ${blue ? 'text-[#77a0f0]' : ''}`}>
                                {n > 11 ? (
                                    <span className="flex items-center gap-1.5 pl-px">
                                        <button aria-label={`展开${name}`} className="grid size-3.5 place-items-center rounded-xs border border-[#484848]">
                                            <svg viewBox="0 0 8 8" className="size-2"><path d="M0 4h8M4 0v8" stroke="#fff" /></svg>
                                        </button>
                                        {name}
                                    </span>
                                ) : <span className="pl-[3px]">{name}</span>}
                            </td>
                            <td className="border-r whitespace-nowrap text-white"><span className="pl-[3px]">{value}</span></td>
                            <td><span className="flex h-4 items-center justify-center pl-0.5">{tick && <Check state="plain" label={`附加${name}`} />}</span></td>
                        </tr>
                    ))}
                </tbody>
            </table>
            <div className="w-[22px] flex-1 bg-[#636363]" />
            <div className="flex h-3.5 items-center gap-1 px-0.5">
                <svg viewBox="0 0 4 8" className="h-2 w-1" aria-hidden="true"><path d="M4 0v8L0 4z" fill="#333" /></svg>
                <div className="h-2 flex-1 rounded-full bg-[#444]" />
                <svg viewBox="0 0 4 8" className="mx-0.5 h-2 w-1" aria-hidden="true"><path d="M0 0v8l4-4z" fill="#333" /></svg>
            </div>
        </section>
    );
}

function Splitter({ d }: { d: string }) {
    return (
        <div className="flex w-1 shrink-0 flex-col pt-[371px]">
            <div className="flex h-[100px] items-center bg-[#373737]">
                <svg viewBox="0 0 4 6" className="h-1.5 w-1" aria-hidden="true"><path d={d} fill="#aaa" /></svg>
            </div>
        </div>
    );
}

const xs = [794, 914, 1034, 1154, 1274];
const ys = [328, 448, 568, 688, 808];

function Drawing() {
    const tickX = (x: number, y: number) => `M${x - 6} ${y + 6}L${x + 5} ${y - 5}`;
    const tickY = (x: number, y: number) => `M${x - 5} ${y - 5}L${x + 6} ${y + 6}`;
    const rows = [208, 268, 868, 928];
    const cols = [674, 734, 1334, 1394];
    return (
        <svg viewBox="462 150 1173 841" preserveAspectRatio="xMidYMid slice" className="h-full w-full" role="img" aria-label="轴网平面图">
            <path d="M794 328h480v480H794z" fill="#666" />
            <g stroke="#008a00" fill="none" shapeRendering="crispEdges">
                {xs.map(x => <path key={x} d={`M${x}.5 150V328M${x}.5 808V991`} />)}
                {ys.map(y => <path key={y} d={`M614 ${y}.5H794M1274 ${y}.5H1455`} />)}
                {rows.map(y => <path key={y} d={`M794 ${y}.5H1274`} />)}
                {cols.map(x => <path key={x} d={`M${x}.5 328V808`} />)}
                <path d="M794 808.5H1274" />
            </g>
            <g stroke="#008a00" fill="none">
                {xs.map(x => <path key={x} d={tickX(x, 268) + tickX(x, 868)} />)}
                {ys.map(y => <path key={y} d={tickY(734, y) + tickY(1334, y)} />)}
                <path d={[tickX(794, 208), tickX(1274, 208), tickX(794, 928), tickX(1274, 928), tickY(674, 328), tickY(674, 808), tickY(1394, 328), tickY(1394, 808)].join('')} />
                {xs.map(x => <Fragment key={x}><circle cx={x + 0.5} cy="162" r="12" /><circle cx={x + 0.5} cy="979" r="12" /></Fragment>)}
                {ys.map(y => <Fragment key={y}><circle cx="602" cy={y + 0.5} r="12" /><circle cx="1467" cy={y + 0.5} r="12" /></Fragment>)}
            </g>
            <g stroke="#f00" fill="none" shapeRendering="crispEdges">
                {xs.map(x => <path key={x} d={`M${x}.5 328V808`} />)}
                {ys.slice(0, 4).map(y => <path key={y} d={`M794 ${y}.5H1274`} />)}
            </g>
            <g fill="#fff" fontSize="18" textAnchor="middle" fontFamily="Noto Sans, sans-serif">
                {xs.map((x, i) => <Fragment key={x}><text x={x + 0.5} y="169">{i + 1}</text><text x={x + 0.5} y="986">{i + 1}</text></Fragment>)}
                {ys.map((y, i) => <Fragment key={y}><text x="602" y={y + 7}>{'EDCBA'[i]}</text><text x="1467" y={y + 7}>{'EDCBA'[i]}</text></Fragment>)}
                {xs.slice(0, 4).map(x => <Fragment key={x}><text x={x + 61} y="245">3000</text><text x={x + 61} y="906">3000</text></Fragment>)}
                {ys.slice(0, 4).map(y => (
                    <Fragment key={y}>
                        <text transform={`translate(711 ${y + 60}) rotate(-90)`}>3000</text>
                        <text transform={`translate(1372 ${y + 60}) rotate(-90)`}>3000</text>
                    </Fragment>
                ))}
                <text x="1034" y="185">12000</text>
                <text x="1034" y="966">12000</text>
                <text transform="translate(651 568) rotate(-90)">12000</text>
                <text transform="translate(1432 568) rotate(-90)">12000</text>
            </g>
            <g strokeWidth="4" fontSize="15" fontFamily="Liberation Sans, sans-serif" textAnchor="middle">
                <path d="M512 940v-18" stroke="#0f0" /><path d="M507 922l5-12 5 12z" fill="#0f0" />
                <path d="M512 941h20" stroke="#f00" /><path d="M530 936l11 5-11 5z" fill="#f00" />
                <circle cx="512" cy="941" r="5" fill="#00b" />
                <text x="512" y="910" fill="#0f0">Y</text><text x="548" y="946" fill="#f00">X</text>
            </g>
        </svg>
    );
}

function Cube({ children, fill = '#4a5260' }: { children?: ReactNode; fill?: string }) {
    return (
        <svg viewBox="0 0 24 24" className="size-6" aria-hidden="true">
            <path d="M1 5l5-4h17v17l-5 5H1zM1 5h17v18M18 5l5-4" fill={fill} stroke="#22272f" />
            {children}
        </svg>
    );
}

function ViewBar() {
    const dark = 'text-[#22272f]';
    return (
        <div className="absolute top-0 right-0 flex h-[238px] w-8 flex-col items-center rounded-b-sm bg-[#4f4f50] pt-3">
            <button aria-label="动态观察">
                <svg viewBox="0 0 24 24" className="size-6"><circle cx="12" cy="12" r="9" fill="#5a6473" stroke="#22272f" /><circle cx="19" cy="8" r="4" fill="#6e7888" stroke="#22272f" /><path d="M3 16c-6 7 12 0 19-8" fill="none" stroke="#22272f" /></svg>
            </button>
            <button aria-label="三维" className="mt-1.5"><Cube><text x="7" y="21" fontSize="8" fontWeight="bold" fill="#22272f">3D</text></Cube></button>
            <button aria-label="线框" className="mt-[5px] flex flex-col items-center gap-1"><Cube fill="#7c8896"><path d="M6 1v17h17M6 18l-5 5" fill="none" stroke="#22272f" /></Cube><Caret className={dark} /></button>
            <button aria-label="实体" className="mt-[7px] flex flex-col items-center gap-1"><Cube /><Caret className={dark} /></button>
            <button aria-label="旋转" className="mt-[7px] flex flex-col items-center gap-1">
                <svg viewBox="0 0 24 24" className="size-6"><path d="M21 17A10 10 0 1120 7M22 2v6h-7" fill="none" stroke="#22272f" strokeWidth="2" /></svg>
                <Caret className={dark} />
            </button>
            <div className="mt-1 mb-2 h-px w-[22px] bg-[#22272f]" />
            <button aria-label="图元列表">
                <svg viewBox="0 0 24 24" className="size-6"><path d="M1 4l2-3h18l2 3v19H1z" fill="#4a5260" stroke="#22272f" /><path d="M1 4h22M12 9v11M3 6l2 2 2-2M15 6l2 2 2-2M3 10h3v2H3zM3 14h3v2H3zM3 18h3v2H3zM14 10h3v2h-3zM14 14h3v2h-3zM14 18h3v2h-3zM7 11h3M7 15h3M7 19h3M18 11h3M18 15h3M18 19h3" fill="none" stroke="#22272f" /></svg>
            </button>
        </div>
    );
}

// level, name, element box, name box
const layers: [number, string, string, string][] = [
    [0, '所有构件', 'part', ''],
    [1, '轴线', 'on', 'off'], [2, '轴网', 'on', 'off'], [2, '辅助轴线', 'on', 'off'],
    [1, '柱', 'part', ''], [2, '柱', 'on', ''], [2, '构造柱', 'on', ''], [2, '砌体柱', '', ''],
    [1, '墙', 'part', ''], [2, '剪力墙', 'on', ''], [2, '人防门框墙', 'on', ''], [2, '砌体墙', 'on', ''],
    [2, '砌体加筋', '', ''], [2, '保温墙', 'on', ''], [2, '暗梁', '', ''], [2, '墙垛', '', ''], [2, '幕墙', 'on', ''],
    [1, '门窗洞', 'part', ''], [2, '门', '', ''], [2, '窗', '', ''], [2, '门联窗', '', ''], [2, '墙洞', '', ''],
    [2, '带形窗', 'on', ''], [2, '带形洞', '', ''], [2, '飘窗', '', ''], [2, '老虎窗', '', ''], [2, '过梁', '', ''], [2, '壁龛', '', ''],
    [1, '梁', 'on', ''], [2, '梁', 'on', ''], [2, '连梁', 'on', ''], [2, '圈梁', 'on', ''],
    [1, '板', 'part', ''], [2, '现浇板', 'on', ''],
];

function DisplaySettings() {
    const fold = (name: string) => (
        <button aria-label={`折叠${name}`} className="grid size-3.5 place-items-center rounded-xs border border-[#484848]">
            <span className="h-px w-[7px] bg-white" />
        </button>
    );
    return (
        <aside className="flex w-[266px] shrink-0 flex-col border-b border-l border-[#333]">
            <CloseStrip />
            <h2 className="h-[22px] shrink-0 border-b border-[#2e2e2e] bg-[#4a4a4a] pl-2 leading-[22px] font-medium text-white">显示设置</h2>
            <div className="flex h-[30px] shrink-0 items-end gap-[5px] bg-[#373737] pl-[3px]">
                <button className="h-[25px] w-[60px] rounded-t-sm bg-[#5c5c5c]">图元显示</button>
                <button className="mb-px h-[22px] w-[60px] rounded-t-sm bg-[#4a4a4a] text-[#8b8b8b]">楼层显示</button>
            </div>
            <div className="mx-0.5 mt-[3px] flex min-h-0 shrink-0 border border-[#383838]">
                <table className="flex-1 table-fixed border-separate border-spacing-0">
                    <colgroup><col /><col className="w-[63px]" /><col className="w-[63px]" /></colgroup>
                    <thead>
                        <tr className="h-[21px] bg-[#636363] text-[#e4e4e4] *:border-r *:border-b *:border-[#4e4e4e] *:p-0 *:leading-4 *:font-normal">
                            <th>图层构件</th><th>显示图元</th><th>显示名称</th>
                        </tr>
                    </thead>
                    <tbody>
                        {layers.map(([level, name, a, b], i) => (
                            <tr key={i} className="h-[21px] *:border-r *:border-b *:border-[#4e4e4e] *:p-0">
                                <td>
                                    <div className="flex h-5 items-center">
                                        {level === 0 && <span className="flex items-center gap-1.5 pl-px">{fold(name)}{name}</span>}
                                        {level > 0 && <span className="h-full w-[9px] border-r border-[#4e4e4e]" />}
                                        {level === 1 && <span className="flex items-center gap-1.5 pl-0.5">{fold(name)}{name}</span>}
                                        {level === 2 && (
                                            <>
                                                <span className={`w-2.5 border-r border-[#4e4e4e] ${layers[i + 1]?.[0] === 1 ? 'h-1/2 self-start' : 'h-full'}`} />
                                                <span className="mr-[5px] h-px w-[17px] bg-[#4e4e4e]" />
                                                {name}
                                            </>
                                        )}
                                    </div>
                                </td>
                                <td><span className="flex justify-center pr-px"><Check state={a} label={`显示图元${name}`} /></span></td>
                                <td><span className="flex justify-center pr-px"><Check state={b} label={`显示名称${name}`} /></span></td>
                            </tr>
                        ))}
                    </tbody>
                </table>
                <div className="flex w-3.5 flex-col items-center py-[3px]">
                    <Caret className="rotate-180 text-[#2c2c2c]" />
                    <div className="mt-0.5 h-60 w-2 rounded-full bg-[#444]" />
                    <span className="mt-auto flex"><Caret className="text-[#2c2c2c]" /></span>
                </div>
            </div>
            <button className="mt-1.5 mr-2 h-[26px] w-[90px] self-end border border-[#3c3c3c] bg-[#636363] text-[#e4e4e4]">恢复默认设置</button>
        </aside>
    );
}

function StatusBar() {
    const box = 'flex h-[25px] items-center justify-center gap-[5px] border border-[#2e2e2e]';
    return (
        <footer className="flex h-[29px] items-center bg-[#383838] pt-px">
            <span className="w-[195px] pl-0.5">= -7646 Y = 14402</span>
            <span className="w-[79px]">层高 : 3</span>
            <span className="w-[133px]">标高 : -3.05~-0.05</span>
            <span className="w-[103px]">0</span>
            <span className="w-10">隐藏:</span>
            <span className="w-[39px]">0</span>
            <div className="flex gap-[3px]">
                <button aria-label="正交" className={`w-[25px] ${box}`}><svg viewBox="0 0 14 12" className="h-3 w-3.5"><path d="M1 0v11h13M1 6h4v5" fill="none" stroke="#bbb" /></svg></button>
                <button aria-label="捕捉" className="flex h-[25px] w-9 items-center justify-center gap-1.5 border border-[#1c6fc0] bg-[#12365c]">
                    <svg viewBox="0 0 16 16" className="size-4"><path d="M2 2h12v13H2z" fill="none" stroke={B} /><path d="M0 0h5v5H0z" fill="#f08a3c" /></svg><Caret />
                </button>
                <button aria-label="交点" className={`w-[25px] ${box}`}><svg viewBox="0 0 16 16" className="size-4"><path d="M1 0l14 16M15 0L1 16" stroke="#6a6a6a" /></svg></button>
                <button aria-label="角度" className={`w-9 ${box}`}><svg viewBox="0 0 16 14" className="h-3.5 w-4"><path d="M12 0L1 12h14" fill="none" stroke="#ccc" /><circle cx="7" cy="5" r="2" fill="#ddd" /></svg><Caret /></button>
                <button aria-label="输入" className={`w-9 ${box}`}><svg viewBox="0 0 16 14" className="h-3.5 w-4"><path d="M0 4h7M3 0v8" stroke="#ccc" /><path d="M6 8h9v4H6z" fill="#ccc" /></svg><Caret /></button>
                <button className={`w-[73px] ${box}`}>跨图层选择</button>
                <button className={`w-[61px] ${box}`}>折线选择</button>
            </div>
            <span className="pl-[3px]">选择柱、墙、梁图元，按右键确认或ESC取消</span>
            <span className="ml-auto pr-3">66.6667 FPS</span>
        </footer>
    );
}

function Taskbar() {
    const slot = 'flex w-6 justify-center';
    return (
        <div className="flex h-[37px] items-center border-t border-white bg-linear-to-r from-[#0e1d26] via-[#182022] to-[#0a1520] text-white">
            <button aria-label="开始" className="flex w-[34px] pt-1 pl-px"><FaWindows className="size-[17px]" /></button>
            <label className="flex h-full w-[344px] items-center gap-2 bg-[#f2f2f2] pt-1 pr-3 pl-[9px] text-sm text-[#444]">
                <span className="size-[22px] rounded-full border-3 border-black" />
                <input aria-label="任务栏搜索" placeholder="在这里输入你要搜索的内容" className="min-w-0 flex-1 outline-none placeholder:text-[#444]" />
                <Mic className="size-[18px] text-black" strokeWidth={1} />
            </label>
            <button aria-label="任务视图" className="flex w-12 justify-center pt-1"><svg viewBox="0 0 16 16" className="size-4"><path d="M1 0v3h9V0M1 16v-3h9v3M1 5h9v6H1zM14 0v4M14 10v6" fill="none" stroke="#fff" /><path d="M13 5h2v3h-2z" fill="#fff" /></svg></button>
            <button aria-label="Edge" className="flex w-[52px] justify-center pt-1"><FaEdge className="size-[22px] text-[#0a7be0]" /></button>
            <button aria-label="广联达" className="flex h-full w-12 items-center justify-center bg-[#404b53] pt-1">
                <svg viewBox="0 0 24 24" className="size-6"><rect width="24" height="24" rx="4" fill="#2c86ea" /><path d="M0 12h24v-8q0-4-4-4H4Q0 0 0 4z" fill="#6db2fa" opacity=".6" /><path d="M4 6q8-3 16 0v4h-6l1 10H9l1-10H4z" fill="#fff" /></svg>
            </button>
            <button aria-label="股票" className="flex w-[50px] justify-center pt-1">
                <svg viewBox="0 0 24 24" className="size-6"><circle cx="12" cy="12" r="12" fill="#0d78bd" /><path d="M4 21v-3h3v5M9 24v-9h3v9M14 24V13h3v9M19 20v-9h3v5" fill="#b6d52a" /><path d="M1 17l8-8 4 3 5-5-3-2 8-1-1 8-3-2-6 6-4-3-6 6z" fill="#fff" /></svg>
            </button>
            <div className="ml-auto flex items-center pt-1">
                <span className="flex w-12 justify-center"><svg viewBox="0 0 16 16" className="size-4"><circle cx="11" cy="4" r="3" fill="none" stroke="#fff" /><circle cx="4" cy="8" r="2" fill="none" stroke="#fff" /><path d="M1 15c0-6 6-6 7-1M8 9c3-3 7-1 7 3" fill="none" stroke="#fff" /></svg></span>
                <span className={slot}><svg viewBox="0 0 16 16" className="size-4"><rect width="14" height="14" rx="2" fill="#19a0f5" /><path d="M7 2v9M3 4l8 5M11 4L3 9" stroke="#fff" strokeWidth="2" /><circle cx="12" cy="12" r="4" fill="#f58b3c" /><path d="M10 11h4M10 13h4" stroke="#fff" /></svg></span>
                <span className={slot}><svg viewBox="0 0 16 16" className="size-4"><rect width="16" height="16" rx="2" fill="#fff" /><path d="M5 12a2 2 0 010-5 3 3 0 016 0 2 2 0 010 5H8L6 10" fill="none" stroke="#3b7cf0" /></svg></span>
                <span className={slot}><FaWeixin className="size-4 text-[#9be06a]" /></span>
                <span className={slot}><svg viewBox="0 0 16 16" className="size-4"><path d="M5 5V1h6v4M4 5h8v10H4z" fill="none" stroke="#fff" /><path d="M9 12l2 3 4-5" fill="none" stroke="#bbb" strokeWidth="2" /></svg></span>
                <span className={slot}><span className="grid h-4 w-3 place-items-center rounded-md bg-[#0a7be0]"><FaBluetoothB className="size-3" /></span></span>
                <span className={slot}><svg viewBox="0 0 16 16" className="size-4"><path d="M8 0l6 2v6c0 4-3 6-6 8-3-2-6-4-6-8V2z" fill="#fff" /><path d="M8 0v16M1 7h14" stroke="#111" /><path d="M11 7l5 9H7z" fill="#ffc20a" /><path d="M11 10v3M11 14v1" stroke="#111" /></svg></span>
                <span className={slot}><svg viewBox="0 0 16 16" className="size-4"><path d="M5 4h9v8H6M14 6h2v4h-2M0 4h4v4H0zM1 2v2M3 2v2M2 8v4h4" fill="none" stroke="#fff" /></svg></span>
                <span className={slot}><svg viewBox="0 0 16 16" className="size-4"><path d="M2 15C2 8 7 3 14 3M5 15c0-5 4-9 9-9M8 15c0-3 3-6 6-6M11 15c0-2 1-3 3-3" fill="none" stroke="#ddd" /></svg></span>
                <span className={slot}><svg viewBox="0 0 16 16" className="size-4"><path d="M1 6h3l3-4v12l-3-4H1zM10 6l4 4M14 6l-4 4" fill="none" stroke="#fff" /></svg></span>
                <span className="w-6 text-center text-sm">英</span>
                <span className="w-[70px] text-center leading-[18px]">13:30<br />2019/2/25</span>
                <span className="flex w-[50px] justify-center"><svg viewBox="0 0 26 26" className="size-[26px]"><path d="M2 2h16v12H9l-3 3v-3H2z" fill="#fff" /><path d="M5 5h10M5 8h10M5 11h7" stroke="#111" /><circle cx="17" cy="18" r="8" fill="#3a3f44" stroke="#999" /><text x="17" y="22" fontSize="12" textAnchor="middle" fill="#fff">7</text></svg></span>
                <span className="mr-[3px] h-8 w-px bg-[#5a6268]" />
            </div>
        </div>
    );
}

export default function App() {
    return (
        <div className="relative flex h-screen w-full flex-col overflow-hidden bg-[#5c5c5c] font-['Open_Sans','Noto_Sans_CJK_SC',sans-serif] text-xs text-[#f2f2f2]">
            <TitleBar />
            <Ribbon />
            <FilterBar />
            <main className="flex min-h-0 flex-1">
                <TypeTree />
                <div className="ml-1 flex w-[298px] shrink-0 flex-col gap-1">
                    <ComponentList />
                    <PropertyList />
                </div>
                <Splitter d="M4 0v6L0 3z" />
                <div className="relative min-w-0 flex-1 bg-black">
                    <Drawing />
                    <ViewBar />
                </div>
                <Splitter d="M0 0v6l4-3z" />
                <DisplaySettings />
            </main>
            <StatusBar />
            <Taskbar />
            {/* pointer arrows drawn over the window */}
            <svg viewBox="0 0 160 190" className="pointer-events-none absolute top-16 left-[461px] h-[190px] w-40" aria-hidden="true">
                <path d="M0 0L15 10L11 14L54 86L112 187L48 88L29 56L7 18L2 17zM112 76L128 83L126 89L152 125L120 92L116 94z" fill="#ff3b36" />
            </svg>
        </div>
    );
}
